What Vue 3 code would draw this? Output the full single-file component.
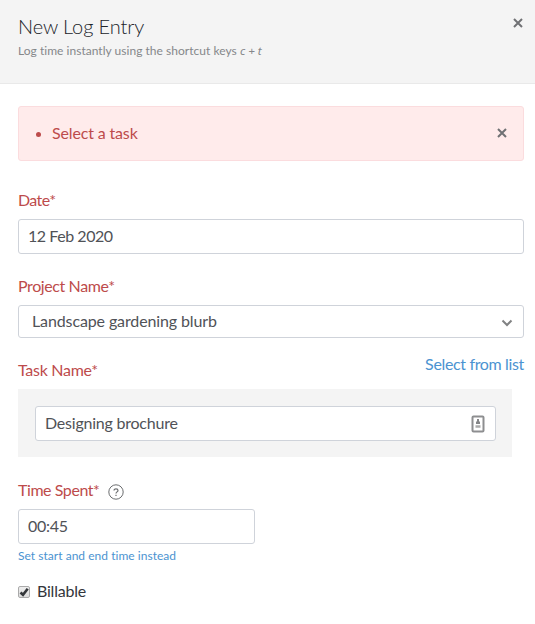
<script setup>
import {ref} from "vue";

const date = ref('12 Feb 2020');
const project = ref('Landscape gardening blurb');
const task = ref('Designing brochure');
const time = ref('00:45');
const billable = ref(true);
const errors = ref(['Select a task']);

const dismissErrors = () => {
  errors.value = [];
};
</script>

<template>
  <div class="log-entry">
    <header class="header">
      <div>
        <h1>New Log Entry</h1>
        <p>Log time instantly using the shortcut keys <em>c + t</em></p>
      </div>
      <button class="close" type="button" aria-label="Close">
        <svg viewBox="0 0 10 10" width="10" height="10"><path d="M1 1l8 8M9 1L1 9"/></svg>
      </button>
    </header>

    <form class="body" @submit.prevent>
      <div v-if="errors.length" class="alert">
        <ul>
          <li v-for="error in errors" :key="error"><span>{{ error }}</span></li>
        </ul>
        <button class="close" type="button" aria-label="Dismiss" @click="dismissErrors">
          <svg viewBox="0 0 10 10" width="10" height="10"><path d="M1 1l8 8M9 1L1 9"/></svg>
        </button>
      </div>

      <label class="label date-label" for="date">Date*</label>
      <input id="date" v-model="date" class="input date" type="text">

      <label class="label project-label">Project Name*</label>
      <div class="select">
        <span>{{ project }}</span>
        <svg viewBox="0 0 12 8" width="12" height="8"><path d="M1.5 1.5L6 6l4.5-4.5"/></svg>
      </div>

      <div class="task-row">
        <label class="label task-label" for="task">Task Name*</label>
        <a class="list-link">Select from list</a>
      </div>
      <div class="task-box">
        <div class="task-field">
          <input id="task" v-model="task" class="input task" type="text">
          <svg class="card-icon" viewBox="0 0 14 18" width="14" height="18">
            <rect x="1.5" y="1.5" width="11" height="15" rx="1"/>
            <path class="fill" d="M6 4h2v2.5h1v2.500H5V6.500h1z"/>
            <path class="lines" d="M4.500 11.500h5"/>
          </svg>
        </div>
      </div>

      <div class="time-row">
        <label class="label time-label" for="time">Time Spent*</label>
        <svg class="help" viewBox="0 0 16 16" width="16" height="16">
          <circle cx="8" cy="8" r="7.2"/>
          <path d="M6 6.500C6 4.300 10 4.300 10 6.500C10 7.900 8 7.900 8 9.500M8 10.700v1.200"/>
        </svg>
      </div>
      <input id="time" v-model="time" class="input time" type="text">
      <a class="switch-link">Set start and end time instead</a>

      <label class="billable">
        <input v-model="billable" type="checkbox">
        <span class="box">
          <svg v-if="billable" viewBox="0 0 12 12" width="12" height="12"><path d="M2.500 6.500l2.500 2.300L9.700 2.800"/></svg>
        </span>
        <span class="billable-text">Billable</span>
      </label>
    </form>
  </div>
</template>

<style>
body {
  background: #fff;
}
</style>

<style scoped>
.log-entry {
  box-sizing: border-box;
  height: 624px;
  overflow: hidden;
  font-family: Lato, "Liberation Sans", sans-serif;
  font-size: 16px;
  font-variant-ligatures: none;
  line-height: 20px;
  color: #33363b;
  white-space: nowrap;
}

svg {
  display: block;
  flex: none;
  fill: none;
}

.header {
  box-sizing: border-box;
  display: flex;
  justify-content: space-between;
  height: 84px;
  padding: 14px 12px 0 18px;
  background: #f4f4f4;
  border-bottom: 1px solid #e9e9e9;
}

h1 {
  margin: 0;
  font-size: 20px;
  font-weight: 300;
  line-height: 24px;
  letter-spacing: -0.1px;
  color: #202329;
}

.header p {
  margin: 5px 0 0;
  font-size: 12px;
  line-height: 16px;
  letter-spacing: 0.03px;
  color: #85878a;
}

.header em {
  font-family: "Noto Sans", sans-serif;
  font-size: 11.5px;
  line-height: 1;
}

.close {
  align-self: flex-start;
  margin: 4px 0 0;
  padding: 0;
  background: none;
  border: 0;
}

.close path {
  stroke: #707174;
  stroke-width: 2;
}

.body {
  padding: 22px 11px 0 18px;
}

.alert {
  box-sizing: border-box;
  display: flex;
  align-items: center;
  justify-content: space-between;
  height: 55px;
  padding: 0 16px 0 17px;
  margin-bottom: 30px;
  background: #ffebeb;
  border: 1px solid #fbdcde;
  border-radius: 3px;
  color: #bd4b4b;
  letter-spacing: -0.15px;
}

.alert .close {
  align-self: center;
  margin: 0 0 1px;
}

ul {
  margin: 0;
  padding: 0;
  list-style: none;
}

li {
  display: flex;
  align-items: center;
}

li span {
  padding-bottom: 1px;
}

li::before {
  content: "";
  width: 5px;
  height: 5px;
  margin: 2px 11px 0 0;
  background: #bd4b4b;
  border-radius: 50%;
}

.label {
  display: block;
  width: max-content;
  padding-bottom: 2px;
  line-height: 18px;
  color: #bd4b4b;
}

.date-label {
  letter-spacing: -0.6px;
}

.input {
  box-sizing: border-box;
  display: block;
  width: 100%;
  height: 35px;
  margin: 8px 0 0;
  padding: 0 9px 3px;
  background: #fff;
  border: 1px solid #cfd3da;
  border-radius: 3px;
  outline: 0;
  font: inherit;
  color: #505257;
}

.date {
  letter-spacing: -0.45px;
}

.project-label {
  margin-top: 23px;
  letter-spacing: -0.4px;
}

.select {
  box-sizing: border-box;
  display: flex;
  align-items: center;
  justify-content: space-between;
  height: 33px;
  margin-top: 8px;
  padding: 0 10px 0 13px;
  border: 1px solid #cfd3da;
  border-radius: 3px;
  color: #505257;
  letter-spacing: -0.12px;
}

.select span {
  padding-bottom: 1px;
}

.select svg {
  margin-top: 3px;
}

.select path {
  stroke: #818283;
  stroke-width: 2;
}

.task-row {
  display: flex;
  justify-content: space-between;
  margin-top: 17px;
}

.task-label {
  padding-top: 6px;
  letter-spacing: -0.28px;
}

.list-link,
.switch-link {
  color: #4b93d1;
  cursor: pointer;
}

.list-link {
  line-height: 18px;
  letter-spacing: -0.35px;
}

.task-box {
  box-sizing: border-box;
  width: 494px;
  height: 68px;
  margin-top: 8px;
  padding: 17px 16px 0 17px;
  background: #f4f4f4;
}

.task-field {
  position: relative;
}

.task {
  margin: 0;
  letter-spacing: -0.22px;
}

.card-icon {
  position: absolute;
  top: 9px;
  right: 11px;
}

.card-icon rect {
  stroke: #8d8e90;
  stroke-width: 2;
}

.card-icon .fill {
  fill: #858688;
}

.card-icon .lines {
  stroke: #aaa;
  stroke-width: 2.5;
}

.time-row {
  display: flex;
  align-items: center;
  gap: 8px;
  height: 20px;
  margin-top: 24px;
}

.time-label {
  letter-spacing: -0.43px;
}

.help {
  margin-top: 2px;
}

.help circle {
  stroke: #6b6d6f;
}

.help path {
  stroke: #6b6d6f;
  stroke-width: 1.2;
}

.time {
  width: 237px;
  letter-spacing: -0.3px;
}

.switch-link {
  display: block;
  width: max-content;
  margin-top: 4px;
  font-size: 12px;
  line-height: 16px;
  letter-spacing: 0.03px;
}

.billable {
  display: flex;
  align-items: center;
  gap: 7px;
  width: max-content;
  height: 20px;
  margin-top: 18px;
  letter-spacing: -0.2px;
}

.billable input {
  position: absolute;
  opacity: 0;
}

.billable-text {
  padding-bottom: 2px;
}

.box {
  box-sizing: border-box;
  width: 12px;
  height: 12px;
  background: linear-gradient(#eee, #dcdcdc);
  border: 1px solid #aaa;
  border-radius: 2px;
}

.box svg {
  margin: -1px;
}

.box path {
  stroke: #34373a;
  stroke-width: 2.6;
}
</style>
